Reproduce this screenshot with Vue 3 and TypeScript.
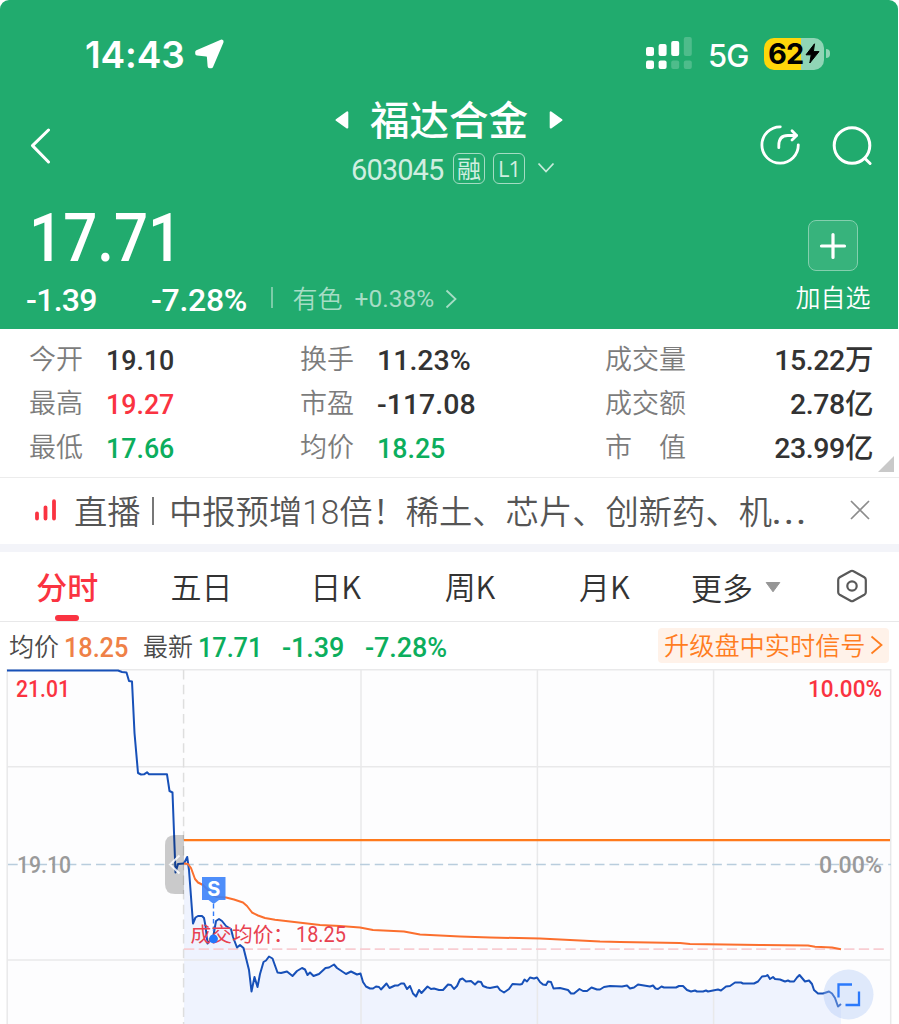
<script setup lang="ts">
type Tone = 'dark' | 'up' | 'down'
interface Stat { label: string; value: string; tone: Tone }

const stats: Stat[] = [
  { label: '今开', value: '19.10', tone: 'dark' },
  { label: '换手', value: '11.23%', tone: 'dark' },
  { label: '成交量', value: '15.22万', tone: 'dark' },
  { label: '最高', value: '19.27', tone: 'up' },
  { label: '市盈', value: '-117.08', tone: 'dark' },
  { label: '成交额', value: '2.78亿', tone: 'dark' },
  { label: '最低', value: '17.66', tone: 'down' },
  { label: '均价', value: '18.25', tone: 'down' },
  { label: '市\u3000值', value: '23.99亿', tone: 'dark' },
]

const tabs: string[] = ['分时', '五日', '日K', '周K', '月K']

// Plain prices are set narrower than signed or suffixed figures
const isPlain = (value: string): boolean => /^\d+\.\d+$/.test(value)

const auction =
  '7,670.5 118,670.5 122,672 126.5,672.5 129,681 132,681.5 134.5,733 138,773 141,774.5 144,774.3 147,772.3 149,774.3 167,774.3 169.5,791 172.5,792.5 175.5,872.5 178,864 184,863.5'

const price =
  '184,863.5 187.2,857 189,870 193,923.5 195.5,917.5 198,916 202,916 204,918 205.5,926 207.5,943.5 213,938 216,921 219,919 222,921 226,926 231,929 233,937 237,947.5 240,945 243.5,948 249,970 251.5,991.5 254.5,977 257.5,987 260,974 263.5,962 266,960.5 269,956.5 272.5,958.5 277.5,972.5 281,973 287,971.5 292.5,976 297,971 302,968 305,969.5 307.5,975 310,972.5 313.5,976 319,974 325.5,968 329,967.5 334,964.5 337,968 340,970 346,974 351,971.5 357,974.5 360.5,973.5 363,982 366,986.5 370,988.5 373,988.5 376,986.5 379,987 381,989.5 386.5,983.5 389.5,988 395,985.5 398,985.5 401,983.5 404,983.5 407,989 410,986 413,993.5 416,996.5 419,990 421.5,993 427.5,986.5 431,989 434,988.5 439,990 443,990 448,984.5 451,985 454,989 457,986 460,979.5 462.5,978.5 466,981.5 471,981 475,984.5 478,981.5 481,982 483,986 487,987.5 490,988 497.5,986.5 500,990 504,992.5 509,989 512.5,984 520,984.5 522,984 524.5,979.5 527,981.5 530,977.5 534,978.5 537,977.5 540,982 543,984.5 546,985 548,981.5 551,982 553.5,988.5 560,988 568,990 571,993.5 574,993.5 579.5,989 583,991 587,991 591.5,987.5 597,989.5 600,989.5 604,987 610,986 622,986.5 627,985.5 630,988.5 634,987.5 638,984.5 641,985 650,986.5 653,985.5 655.5,988.5 658,989 661.5,986.5 664,987.5 676,987.5 679,986 683,986 687,990 691,991.5 695,990.5 697,991.5 703,991.5 706,990.5 708,991.5 718,989.5 721,990.5 726,986.5 730,986 735,982.5 741,982.5 743,983.5 754,983.5 758,981.5 762,976.5 766,976 767.5,975 770,979 773,977 775,979 780,979.5 785,981.5 788,980.5 790,981.5 794,981.5 797,977.5 799.5,975 805,981.5 809,980.5 812,984 814,990 818,993.5 823,993.5 829,991.5 832,993.5 835,998 838,1006.5 841,1004'

const average =
  '184,863.5 188,864 191,868 195,879 198,882.5 203,885 208,890 213,895 217,897 226,897.5 234,899.5 243,902.5 247,906 252,912.5 258,915.5 265,918 275,919.8 290,921.5 305,923.3 320,925 340,926 360,927.5 373,930 404,931.5 420,934.5 460,936.5 490,937.5 540,938.5 600,941.5 620,942 680,943 690,944 760,945 808,945.5 815,946.7 832,947.5 841,949.3'

const area = `${price} 841,1024 184,1024`
</script>

<template>
  <main class="screen">
    <header class="top">
      <div class="status">
        <span class="time">14:43</span>
        <svg class="locate" width="32" height="32" viewBox="0 0 32 32">
          <path d="M28.600 3.600 4.200 14 4.200 15.600 13.500 16.400 Q15.600 16.600 15.900 18.800L16.600 28.200 18.200 28.200Z" fill="#fff" stroke="#fff" stroke-width="4" stroke-linejoin="round" />
        </svg>
        <svg class="signal" width="46" height="33" viewBox="0 0 46 33">
          <g fill="#fff">
            <rect x="0" y="10" width="8" height="9" rx="2" /><rect x="12.6" y="7" width="8" height="12" rx="2" />
            <rect x="25.2" y="4" width="8" height="15" rx="2" /><rect x="0" y="23.5" width="8" height="8.5" rx="2" />
            <rect x="12.6" y="23.5" width="8" height="8.5" rx="2" />
          </g>
          <g fill="#fff" opacity=".2">
            <rect x="37.8" y="0" width="8" height="19" rx="2" /><rect x="25.2" y="23.5" width="8" height="8.5" rx="2" />
            <rect x="37.8" y="23.5" width="8" height="8.5" rx="2" />
          </g>
        </svg>
        <span class="net">5G</span>
        <div class="battery">
          <span>62</span>
          <svg width="15" height="21" viewBox="0 0 15 21"><path d="M9.5.8 1 11.8h5.2L4.8 20 14 8.6H8.4Z" fill="#000" stroke="#000" stroke-linejoin="round" /></svg>
        </div>
        <i class="cap" />
      </div>

      <div class="nav">
        <svg class="back" width="22" height="36" viewBox="0 0 22 36"><path d="M18.5 2 2.5 17.6 18.5 34" fill="none" stroke="#fff" stroke-width="3" stroke-linecap="round" stroke-linejoin="round" /></svg>
        <div class="names">
          <div class="title">
            <svg width="14" height="20" viewBox="0 0 14 20"><path d="M1.500 10 12.300 2.400v15.200Z" fill="#fff" stroke="#fff" stroke-width="2" stroke-linejoin="round" /></svg>
            <h1>福达合金</h1>
            <svg width="14" height="20" viewBox="0 0 14 20"><path d="M12.500 10 1.700 2.400v15.200Z" fill="#fff" stroke="#fff" stroke-width="2" stroke-linejoin="round" /></svg>
          </div>
          <div class="code">
            <span class="digits">603045</span>
            <span class="badge">融</span>
            <span class="badge thin">L1</span>
            <svg width="18" height="12" viewBox="0 0 18 12"><path d="m1.5 1.5 7.5 8 7.5-8" fill="none" stroke="#c8ebdb" stroke-width="1.8" /></svg>
          </div>
        </div>
        <svg class="share" width="42" height="42" viewBox="0 0 42 42" fill="none" stroke="#fff" stroke-width="2.8" stroke-linecap="round" stroke-linejoin="round">
          <path d="M21.3 2.800a18.200 18.200 0 1 0 18 18" /><path d="M19.8 23.700v-2.200c0-6.500 3-10 9-10h8.500" /><path d="m33 6.800 4.600 4.700-4.600 4.600" />
        </svg>
        <svg class="search" width="42" height="42" viewBox="0 0 42 42" fill="none" stroke="#fff" stroke-width="3" stroke-linecap="round">
          <circle cx="20" cy="20.500" r="17.800" /><path d="m33 33.500 5.100 5" />
        </svg>
      </div>

      <div class="quote">
        <div class="figures">
          <strong class="last">17.71</strong>
          <div class="moves">
            <span class="chg">-1.39</span>
            <span class="pct">-7.28%</span>
            <i class="bar" />
            <span class="sector">有色</span>
            <span class="sector-pct">+0.38%</span>
            <svg width="13" height="20" viewBox="0 0 13 20"><path d="m1.5 1.5 9 8.5-9 8.5" fill="none" stroke="#a6ddc5" stroke-width="1.8" /></svg>
          </div>
        </div>
        <div class="add">
          <span class="plus"><svg width="28" height="28" viewBox="0 0 28 28"><path d="M14 2.5v23M2.5 14h23" stroke="#fff" stroke-width="3.2" stroke-linecap="round" /></svg></span>
          <span class="add-text">加自选</span>
        </div>
      </div>
    </header>

    <section class="stats">
      <template v-for="s in stats" :key="s.label">
        <span class="label">{{ s.label }}</span>
        <span class="value" :class="[s.tone, { plain: isPlain(s.value) }]">{{ s.value }}</span>
      </template>
      <i class="fold" />
    </section>

    <section class="live">
      <svg class="level" width="24" height="22" viewBox="0 0 24 22"><path d="M3 14.500v5M11.500 8.300v11.200M20 2.200v17.300" stroke="#fa3341" stroke-width="3.800" stroke-linecap="round" /></svg>
      <span class="live-tag">直播</span>
      <i />
      <span class="headline">中报预增18倍！稀土、芯片、创新药、机<span class="dots">...</span></span>
      <svg class="close" width="20" height="20" viewBox="0 0 20 20"><path d="m1 1 18 18M19 1 1 19" stroke="#8c8c8c" stroke-width="1.7" /></svg>
    </section>

    <nav class="tabs">
      <a v-for="(t, i) in tabs" :key="t" :class="{ active: i === 0 }">{{ t }}</a>
      <a class="more">更多 <svg width="16" height="12" viewBox="0 0 16 12"><path d="M1.2 1.5h13.6L8 10.8Z" fill="#969696" stroke="#969696" stroke-linejoin="round" /></svg></a>
      <svg class="gear" width="34" height="36" viewBox="0 0 34 36" fill="none" stroke="#595959" stroke-width="2.2" stroke-linejoin="round">
        <path d="M15.5 3.2q1.5-.9 3 0l10.8 6.1q1.5.9 1.5 2.6v12.3q0 1.7-1.5 2.6L18.5 32.8q-1.5.9-3 0L4.700 26.800q-1.500-.9-1.500-2.600V11.900q0-1.700 1.500-2.600Z" /><circle cx="17" cy="18" r="4.700" />
      </svg>
    </nav>

    <section class="summary">
      <span class="k">均价</span><span class="v orange avg plain">18.25</span>
      <span class="k">最新</span><span class="v now plain">17.71</span><span class="v diff">-1.39</span><span class="v">-7.28%</span>
      <span class="upgrade"><span>升级盘中实时信号</span><svg width="14" height="22" viewBox="0 0 14 22"><path d="m1.500 2.500 10 8.500-10 8.500" fill="none" stroke="#ff7d1f" stroke-width="1.800" /></svg></span>
    </section>

    <svg class="chart" width="899" height="355" viewBox="0 669 899 355">
      <rect x="7" y="669" width="884" height="355" fill="#fdfdfe" />
      <polygon :points="area" fill="#eff3fe" />
      <g stroke="#e9e9ea" stroke-width="1.500" fill="none">
        <path d="M7 669.800H891M7 766.700H891M7 959.900H891M7.200 669V1024M361 669V1024M537.400 669V1024M713.600 669V1024M890.700 669V1024" />
        <path d="M183.600 670V1024" stroke-dasharray="9.500 5.170" stroke="#dedede" />
      </g>
      <path d="M8 864.500H891" stroke="#b9cddd" stroke-width="1.300" stroke-dasharray="9.700 4.970" />
      <path d="M184 949.200H888" stroke="#f8cdd2" stroke-width="1.700" stroke-dasharray="10.300 4.370" />
      <path d="M184 840.200H890" stroke="#ff7a1c" stroke-width="2.200" />
      <text class="axis gray" x="17" y="872.500" textLength="54" lengthAdjust="spacingAndGlyphs">19.10</text>
      <text class="axis gray" x="819" y="872.500" textLength="63" lengthAdjust="spacingAndGlyphs">0.00%</text>
      <text class="axis red" x="16" y="697" textLength="54" lengthAdjust="spacingAndGlyphs">21.01</text>
      <text class="axis red" x="808" y="697" textLength="74" lengthAdjust="spacingAndGlyphs">10.00%</text>
      <polyline class="line" :points="auction" />
      <path d="M184 835h-9q-10 0-10 10v39q0 10 10 10h9Z" fill="#000" opacity=".2" />
      <path d="m179.500 855.500-9.500 9 9.500 9" fill="none" stroke="#fff" stroke-width="2" opacity=".85" />
      <polyline class="line" :points="price" />
      <polyline :points="average" fill="none" stroke="#fb6f2e" stroke-width="2" stroke-linejoin="round" />
      <path d="M213.500 904V934" stroke="#327cf8" stroke-width="1.400" stroke-dasharray="4.500 3" />
      <path d="M202 877h23.500v23h-6.500l-5.300 4-5.200-4H202Z" fill="#3b82fa" opacity=".9" />
      <text class="mark" x="213.700" y="896" text-anchor="middle">S</text>
      <text class="deal" x="190.500" y="941.500" textLength="83">成交均价</text>
      <text class="deal" x="273" y="941.500">：</text>
      <text class="deal num" x="296" y="941.800" textLength="50" lengthAdjust="spacingAndGlyphs">18.25</text>
      <circle cx="213.500" cy="938.800" r="4.400" fill="#2478fb" />
      <circle cx="848.500" cy="994.500" r="25" fill="#a9c5f8" opacity=".36" />
      <path d="M838.500 997.500v-13h13.500M845.500 1005h13.500v-13.500" fill="none" stroke="#2b79fb" stroke-width="2.300" />
    </svg>
  </main>
</template>

<style>
body { background: #fff; overflow: hidden; }
</style>

<style scoped>
.screen {
  width: 899px; height: 1024px; overflow: hidden; background: #fff; color: #333;
  font-family: Roboto, "Noto Sans CJK SC", sans-serif; font-weight: 350;
}
svg { display: block; flex: none; }
span, a, strong { white-space: nowrap; }
.top { width: 898px; height: 329px; background: #21ab6e; border-radius: 9px 9px 0 0; color: #fff; }
.status { display: flex; align-items: center; height: 107px; box-sizing: border-box; padding-left: 85px; font-family: Inter, sans-serif; }
.time { width: 108px; padding-top: 1px; font-size: 37px; font-weight: 600; letter-spacing: -.1px; }
.signal { margin-left: 421px; }
.net { width: 56px; margin-left: 16px; font-size: 31px; font-weight: 450; margin-top: 3px; letter-spacing: -1px; }
.battery { display: flex; align-items: center; width: 60px; height: 32px; box-sizing: border-box; padding-left: 4px; border-radius: 10px; background: linear-gradient(90deg, #ffd60a 62%, #90d5b6 62%); color: #000; }
.battery span { width: 37px; font-size: 29px; font-weight: 700; letter-spacing: -.8px; line-height: 32px; }
.cap { width: 4px; height: 9px; margin-left: 2px; border-radius: 0 5px 5px 0; background: #90d5b6; }

.nav { display: flex; height: 90px; padding-left: 30px; }
.back { margin-top: 21px; }
.names { width: 300px; margin-left: 248px; }
.title { display: flex; align-items: center; height: 26px; padding-left: 35px; }
.title h1 { width: 158px; margin: -4px 21px 0 21px; font: 450 39.5px/40px "Noto Sans CJK SC", sans-serif; white-space: nowrap; }
.code { display: flex; align-items: center; height: 32px; margin-top: 19px; padding-left: 51px; color: #d0eee0; }
.digits { width: 102px; padding-top: 3px; font-size: 29px; font-weight: 450; letter-spacing: -.9px; }
.badge { width: 32px; height: 31px; box-sizing: border-box; border: 1.500px solid #a4dcc3; border-radius: 6px; font-size: 24px; font-weight: 400; line-height: 32px; text-align: center; }
.thin { margin: 0 12px 0 8px; font-family: "Open Sans", sans-serif; font-size: 22px; line-height: 29px; letter-spacing: -1px; }
.share { margin: 17px 0 0 159px; }
.search { margin: 18px 0 0 31px; }

.quote { display: flex; justify-content: space-between; }
.last { display: block; width: 200px; height: 80px; margin-left: 29px; font-size: 67.500px; line-height: 81px; font-weight: 550; transform: scaleX(.89); transform-origin: left; }
.moves { display: flex; align-items: center; height: 45px; padding-left: 26px; }
.chg, .pct { font-size: 32px; font-weight: 500; letter-spacing: -.3px; }
.chg { width: 125px; letter-spacing: -.7px; }
.pct { width: 120px; }
.bar { width: 1.500px; height: 21px; margin: 0 20px 4px 0; background: #7bcca8; }
.sector { width: 62px; font-size: 25px; color: #a6ddc5; margin-top: -6px; }
.sector-pct { width: 90px; margin-top: -2px; font-size: 24.500px; color: #a6ddc5; font-weight: 450; }
.moves svg { margin-top: -2px; }
.add { display: flex; flex-direction: column; align-items: center; width: 130px; padding-top: 23px; }
.plus { display: grid; place-items: center; width: 50px; height: 51px; box-sizing: border-box; border: 1.500px solid #84cfae; border-radius: 8px; background: #37b37c; }
.add-text { margin-top: 10px; font-size: 25px; line-height: 36px; }

.stats {
  position: relative; display: grid; grid-template: repeat(3, 44px) / 77px 194px 77px 228px 110px 158px;
  height: 139px; padding: 9px 0 0 29px; border-bottom: 1.500px solid #ececec; line-height: 44px;
}
.label { font-size: 27px; color: #7c7c7c; line-height: 44px; }
.value { font-size: 28.500px; font-weight: 500; color: #333; line-height: 46px; }
.value:nth-of-type(6n) { text-align: right; letter-spacing: -.4px; }
.plain { transform: scaleX(.94); transform-origin: left; }
.value.up { color: #fa3341; }
.value.down { color: #0cae5d; }
.fold { position: absolute; right: 5px; bottom: 5px; border: 8px solid transparent; border-right-color: #c9c9c9; border-bottom-color: #c9c9c9; }

.live { display: flex; align-items: center; height: 66px; padding-left: 34px; border-bottom: 8px solid #f3f4f9; font-size: 33.300px; color: #555; }
.level, .close { margin-bottom: 2px; }
.live-tag, .headline { padding-bottom: 4px; }
.live-tag { width: 68px; margin-left: 16px; }
.live i { width: 2px; height: 28px; margin: 0 15px 0 10px; background: #777; }
.headline { width: 681px; }
.dots { letter-spacing: 3px; font-weight: 500; }

.tabs { display: flex; align-items: center; height: 69px; border-bottom: 1.500px solid #e8e8e9; font-size: 31px; }
.tabs a { position: relative; width: 134.300px; height: 69px; line-height: 67px; text-align: center; font-family: "Noto Sans CJK SC", sans-serif; }
.tabs a.active { color: #fa3341; font-weight: 500; }
.tabs a.active::after { content: ""; position: absolute; left: 55px; bottom: 0; width: 24px; height: 6.500px; border-radius: 4px; background: #fa3341; }
.tabs .more { display: flex; align-items: center; gap: 12px; margin-left: 19.500px; width: 144px; }
.tabs a.more { text-align: left; line-height: 65px; }
.gear { margin-bottom: 1px; }

.summary { display: flex; align-items: center; height: 47px; padding-left: 9px; font-size: 25px; }
.k { width: 55px; padding-bottom: 2px; color: #4a4a4a; }
.v { padding-top: 4px; font-size: 27px; font-weight: 500; color: #0cae5d; letter-spacing: -.1px; }
.orange { color: #ef8147; }
.avg { width: 79px; }
.now { width: 84px; }
.diff { width: 83px; }
.upgrade { display: flex; align-items: center; gap: 4px; width: 231px; height: 35px; box-sizing: border-box; margin: 0 10px 1px auto; padding-left: 6px; border-radius: 4px; background: #fff2e9; color: #ff7d1f; }
.upgrade span { padding-top: 4px; font-size: 25.200px; line-height: 34px; }

.axis { font-size: 24px; font-weight: 500; }
.red { fill: #fa3341; }
.gray { fill: #9a9a9a; }
.line { fill: none; stroke: #1750b8; stroke-width: 2; stroke-linejoin: round; }
.mark { fill: #fff; font: 700 20px Inter, sans-serif; }
.deal { fill: #e84150; font: 400 20.700px "Noto Sans CJK SC", sans-serif; }
.num { font: 450 22.500px Roboto, sans-serif; }
</style>
